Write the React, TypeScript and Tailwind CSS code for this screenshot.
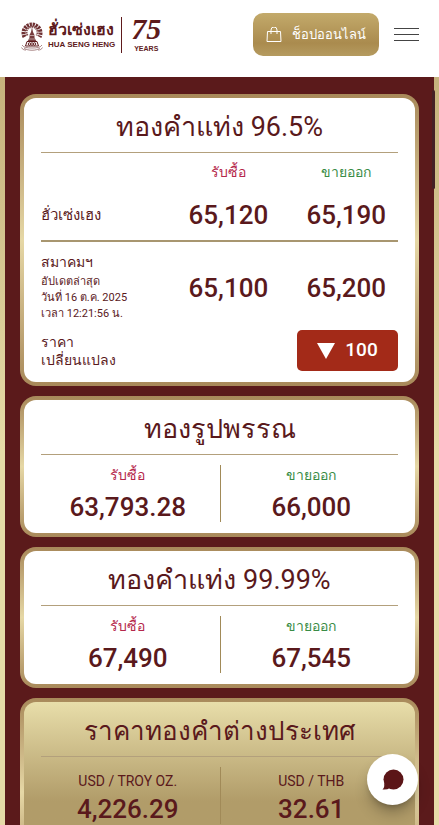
import React from 'react';

interface PriceCardProps {
  title: string;
  buy: string;
  sell: string;
  buyLabel?: string;
  sellLabel?: string;
  gold?: boolean;
}

const Emblem: React.FC = () => (
  <svg viewBox="0 0 44 62" className="h-[31px] w-[22px] shrink-0" fill="none" stroke="#5e1a1c" aria-hidden="true">
    {/* feather fan */}
    <path d="M7 34A17 17 0 1 1 37 34" strokeWidth="8" strokeDasharray="4.4 1.6" opacity=".9" />
    <path d="M13 31A11 11 0 1 1 31 31" strokeWidth="4" strokeDasharray="3 1.5" opacity=".75" />
    {/* spire */}
    <path d="M22 14l2 10 3 6v5l4 8H13l4-8v-5l3-6z" fill="#5e1a1c" stroke="none" opacity=".85" />
    <path d="M17 31h10M15 38h14" stroke="#fff" strokeWidth="1" />
    <g strokeWidth="2">
      <path d="M12 43h20l3 9H9z" />
      <circle cx="17" cy="48" r="2.5" />
      <circle cx="27" cy="48" r="2.5" />
      <path d="M22 43v9" />
    </g>
    <path d="M2 50c3 5 10 6 20 6s17-1 20-6M6 56c7 6 25 6 32 0M1 55c2 4 5 5 9 5M43 55c-2 4-5 5-9 5" strokeWidth="1.5" opacity=".7" />
  </svg>
);

const Header: React.FC = () => (
  <header className="flex h-[77px] shrink-0 items-start justify-between bg-white pl-[21px] pr-5">
    <a href="#home" className="mt-4 flex h-[38px] items-center text-[#5e1a1c]">
      <Emblem />
      <div className="ml-[5px]">
        <p className="whitespace-nowrap text-[16px] font-bold leading-5">ฮั่วเซ่งเฮง</p>
        <p className="whitespace-nowrap font-[Liberation_Sans] text-[8px] font-bold leading-[10px]">HUA SENG HENG</p>
      </div>
      <div className="ml-[6px] h-9 w-px bg-[#5e1a1c]" />
      <div className="ml-[9px] flex flex-col items-center">
        <span className="font-[Liberation_Serif] text-[30px] font-bold italic leading-6">75</span>
        <span className="pt-1 font-[Liberation_Sans] text-[7px] font-bold leading-2">YEARS</span>
      </div>
    </a>
    <div className="mt-[13px] flex items-center gap-[15px]">
      <button className="flex h-[43px] w-[126px] items-center justify-center gap-[10px] rounded-[10px] bg-linear-to-b from-[#c3aa6b] via-[#aa8b4e] via-70% to-[#b59b60] text-[13px] text-white">
        <svg viewBox="0 0 16 16" className="h-4 w-4" fill="none" stroke="currentColor" aria-hidden="true">
          <path d="M1.5 4.5h13l.5 10H1zM5 7V3a3 3 0 0 1 6 0v4" />
        </svg>
        ช็อปออนไลน์
      </button>
      <button aria-label="Menu" className="flex w-[25px] flex-col gap-[5px]">
        <span className="h-px w-full bg-[#444]" />
        <span className="h-px w-full bg-[#444]" />
        <span className="h-px w-full bg-[#444]" />
      </button>
    </div>
  </header>
);

const Frame: React.FC<{ gold?: boolean; children: React.ReactNode }> = ({ gold, children }) => (
  <section className="rounded-[16px] bg-linear-to-b from-[#a8895a] via-[#e6d8a6] to-[#a8895a] p-1">
    <div
      className={`rounded-[12px] px-[17px] ${
        gold ? 'h-[180px] bg-linear-to-b from-[#e8deaa] via-[#b19c69] via-55% to-[#b19c69]' : 'bg-white'
      }`}
    >
      {children}
    </div>
  </section>
);

const Title: React.FC<{ small?: boolean; children: React.ReactNode }> = ({ small, children }) => (
  <h2
    className={`flex h-[55px] items-center justify-center whitespace-nowrap border-b border-[#b3a07c] pt-1 leading-8 ${
      small ? 'text-[26px]' : 'text-[27px]'
    }`}
  >
    {children}
  </h2>
);

const PriceCard: React.FC<PriceCardProps> = ({ title, buy, sell, buyLabel, sellLabel, gold }) => (
  <Frame gold={gold}>
    <Title small={gold}>{title}</Title>
    <dl className="relative -mx-[5px] grid h-[78px] grid-cols-2 pt-[10px] text-center">
      <div>
        <dt className={`text-[14px] leading-5 ${buyLabel ? 'pt-1' : 'font-medium text-[#b5274b]'}`}>{buyLabel ?? 'รับซื้อ'}</dt>
        <dd className={`text-[26px] font-medium leading-7 ${buyLabel ? 'pt-1' : 'pt-2'}`}>{buy}</dd>
      </div>
      <div>
        <dt className={`text-[14px] leading-5 ${sellLabel ? 'pt-1' : 'font-medium text-[#3a8c46]'}`}>{sellLabel ?? 'ขายออก'}</dt>
        <dd className={`text-[26px] font-medium leading-7 ${sellLabel ? 'pt-1' : 'pt-2'}`}>{sell}</dd>
      </div>
      <div className="absolute left-1/2 top-[10px] h-[57px] w-px bg-[#a18a58]" />
    </dl>
  </Frame>
);

const BarCard: React.FC = () => (
  <Frame>
    <Title>ทองคำแท่ง 96.5%</Title>
    <div className="pb-[11px]">
      <table className="w-full table-fixed border-collapse">
        <thead>
          <tr className="h-[38px] text-[14px]">
            <td className="w-[34%]" />
            <th className="w-[37%] font-medium text-[#b5274b]">รับซื้อ</th>
            <th className="w-[29%] font-medium text-[#3a8c46]">ขายออก</th>
          </tr>
        </thead>
        <tbody>
          <tr className="h-[50px] border-b-2 border-[#a89670] text-center text-[26px] font-medium">
            <th className="text-left text-[15px] font-medium">ฮั่วเซ่งเฮง</th>
            <td>65,120</td>
            <td>65,190</td>
          </tr>
          <tr className="h-[89px] text-center text-[26px] font-medium">
            <th className="whitespace-nowrap text-left align-top font-normal">
              <p className="pt-2 text-[14px] font-medium leading-6">สมาคมฯ</p>
              <p className="text-[11px] leading-4">
                อัปเดตล่าสุด
                <br />
                วันที่ 16 ต.ค. 2025
                <br />
                เวลา 12:21:56 น.
              </p>
            </th>
            <td className="pt-1">65,100</td>
            <td className="pt-1">65,200</td>
          </tr>
          <tr>
            <th className="text-left text-[14px] font-medium leading-[18px]">
              ราคา
              <br />
              เปลี่ยนแปลง
            </th>
            <td />
            <td>
              <div className="ml-auto flex h-[41px] max-w-[101px] items-center justify-center gap-[10px] rounded-[5px] bg-[#a32a18] text-[19px] font-medium text-white">
                <svg viewBox="0 0 18 16" className="h-4 w-[18px]" fill="currentColor" aria-hidden="true">
                  <path d="M0 0h18L9 16z" />
                </svg>
                100
              </div>
            </td>
          </tr>
        </tbody>
      </table>
    </div>
  </Frame>
);

export default function App() {
  return (
    <div className="relative flex h-screen flex-col overflow-hidden font-[Roboto,sans-serif] text-[#5a191c]">
      <Header />
      <main className="relative min-h-0 flex-1 overflow-hidden bg-linear-to-b from-[#c6b27c] via-[#e6dba8] via-50% to-[#e6dba8] px-[5px]">
        <div className="flex flex-col gap-[10px] bg-[#5b1a1b] px-[15px] pb-4 pt-[17px]">
          <BarCard />
          <PriceCard title="ทองรูปพรรณ" buy="63,793.28" sell="66,000" />
          <PriceCard title="ทองคำแท่ง 99.99%" buy="67,490" sell="67,545" />
          <PriceCard title="ราคาทองคำต่างประเทศ" buy="4,226.29" sell="32.61" buyLabel="USD / TROY OZ." sellLabel="USD / THB" gold />
        </div>
        <div className="absolute right-1 top-[13px] h-[99px] w-[3px] rounded-full bg-[#452025]" />
      </main>
      <button
        aria-label="Chat"
        className="absolute bottom-5 right-[21px] flex size-[51px] items-center justify-center rounded-full bg-white shadow-lg shadow-black/30"
      >
        <svg viewBox="0 0 22 22" className="size-[22px]" fill="#5b1517" aria-hidden="true">
          <circle cx="11.5" cy="10.5" r="10" />
          <path d="M2 14q1 4-1.5 6.5Q5 21 8 19z" />
        </svg>
      </button>
    </div>
  );
}
